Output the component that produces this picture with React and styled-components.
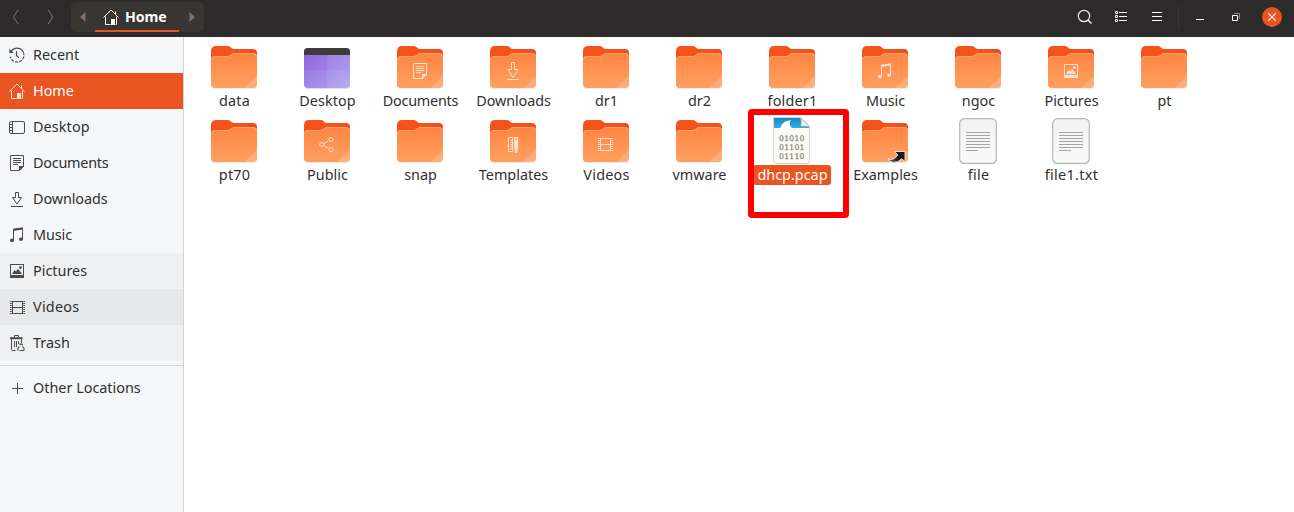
import React from 'react';
import styled, { createGlobalStyle } from 'styled-components';

const GlobalStyle = createGlobalStyle`
  * { box-sizing: border-box; }
  body { margin: 0; background: #fff; color: #303030; font: 14.4px/20px "Noto Sans", "Open Sans", sans-serif; }
`;

const Window = styled.div`
  position: relative;
  width: 1294px;
  height: 512px;
  display: flex;
  flex-direction: column;
  overflow: hidden;
  background: #fff;
`;

const HeaderBar = styled.header`
  height: 37px;
  flex: none;
  display: flex;
  align-items: flex-start;
  justify-content: space-between;
  padding-right: 4px;
  background: #2c2a2a;
  color: #fff;
`;

const HeaderGroup = styled.div`
  display: flex;
  align-items: center;
  height: 34px;
`;

const NavButton = styled.span`
  width: 35px;
  height: 34px;
  display: flex;
  align-items: center;
  justify-content: center;
  color: #7f7d7b;
  svg { display: block; }
`;

const PathBar = styled.nav`
  height: 30px;
  margin-left: 1px;
  display: flex;
  border-radius: 5px;
  background: #383632;
`;

const PathArrow = styled.span`
  width: ${(p) => p.$width}px;
  display: flex;
  align-items: center;
  justify-content: center;
  color: #75736f;
`;

const PathCurrent = styled.span`
  width: 84px;
  display: flex;
  align-items: center;
  padding: 2px 0 0 8px;
  gap: 6px;
  border-bottom: 2px solid #e95420;
  font-weight: 700;
  font-size: 14.2px;
  letter-spacing: -0.1px;
  white-space: nowrap;
`;

const HeaderButton = styled.span`
  width: 36px;
  height: 34px;
  display: flex;
  align-items: center;
  justify-content: center;
  svg { display: block; }
`;

const HeaderDivider = styled.span`
  width: 1px;
  height: 24px;
  margin: 0 3px;
  background: #383636;
`;

const CloseDot = styled.span`
  width: 20px;
  height: 20px;
  display: flex;
  border-radius: 50%;
  align-items: center;
  justify-content: center;
  background: #e95420;
`;

const Body = styled.div`
  flex: 1;
  display: flex;
`;

const Sidebar = styled.aside`
  width: 184px;
  flex: none;
  background: #f5f6f8;
  border-right: 1px solid #d2d3d5;
`;

const rowTone = { plain: 'transparent', active: '#e95420', soft: '#eff0f2', strong: '#e7e8ea' };

const Place = styled.div`
  height: 36px;
  display: flex;
  align-items: center;
  padding-left: 9px;
  gap: 8px;
  background: ${(p) => rowTone[p.$tone || 'plain']};
  color: ${(p) => (p.$tone === 'active' ? '#fff' : '#303030')};
  white-space: nowrap;
  svg { display: block; color: ${(p) => (p.$tone === 'active' ? '#ffe3d8' : '#4b4b4b')}; }
`;

const PlaceName = styled.span`
  letter-spacing: ${(p) => p.$track || 0}px;
`;

const Separator = styled.div`
  height: 1px;
  margin: 4px 0;
  background: #d4d5d7;
`;

const FileGrid = styled.main`
  flex: 1;
  display: grid;
  grid-template-columns: repeat(11, 93px);
  grid-auto-rows: 74px;
  align-content: start;
  padding: 6px 0 0 3.5px;
`;

const FileItem = styled.div`
  display: flex;
  flex-direction: column;
  align-items: center;
  svg { display: block; }
`;

const FileName = styled.span`
  height: 20px;
  padding: 0 3.5px 0 4.5px;
  border-radius: 3px;
  white-space: nowrap;
  letter-spacing: ${(p) => p.$track || 0}px;
  color: ${(p) => (p.$selected ? '#fff' : '#303030')};
  background: ${(p) => (p.$selected ? '#e95420' : 'transparent')};
`;

const Highlight = styled.div`
  position: absolute;
  left: 748px;
  top: 109px;
  width: 101px;
  height: 109px;
  border: 6px solid #fe0000;
  border-radius: 4px;
`;

const glyphs = {
  recent: (
    <g fill="none" stroke="currentColor">
      <path d="M2.1 4.4A7 7 0 1 1 1.2 9.6" strokeDasharray="18 1.3 3 1.3 3 1.3 3 1.3 3 1.3" strokeWidth="1.15" />
      <path d="M7.500 4v4.500l2.300 2.300" strokeWidth="1.15" />
      <path d="M.4 1.8V6H4.6Z" fill="currentColor" stroke="none" />
    </g>
  ),
  home: (
    <g fill="none" stroke="currentColor">
      <path d="M.5 8.5L8 1l7.5 7.5M12.5 5V2.5" />
      <path d="M2.5 7.5v8h5M13.5 7.5v8h-1" />
      <path d="M8 10h4v6H8Z" fill="currentColor" stroke="none" />
    </g>
  ),
  desktop: (
    <g fill="none" stroke="currentColor">
      <rect x=".5" y="2.5" width="15" height="12" rx="1.5" />
      <path d="M3.5 2.5v12M1 5.5h2M1 8.5h2M1 11.5h2" />
    </g>
  ),
  documents: (
    <g fill="none" stroke="currentColor">
      <path d="M1.5.5h13v11l-4 4h-9Z" />
      <path d="M4 3.5h8M4 5.5h8M4 7.5h8M4 9.5h5" />
      <path d="M10 16v-5h5Z" fill="currentColor" stroke="none" />
    </g>
  ),
  downloads: (
    <path d="M6.500 1.500h3v5h3L8 13 3.500 6.500h3ZM2 15.500h12" fill="none" stroke="currentColor" />
  ),
  downloadsTall: (
    <path d="M6.500-.5h3v7h3.500L8 14.700 3 6.500h3.500ZM2 16.500h12" fill="none" stroke="currentColor" />
  ),
  music: (
    <g fill="none" stroke="currentColor">
      <path d="M4.5 13V2.2l9-1.2v11" />
      <path d="M4 2l10-1.4v2L4 4Z" fill="currentColor" stroke="none" />
      <ellipse cx="3" cy="13.4" rx="2" ry="1.8" fill="currentColor" stroke="none" />
      <ellipse cx="12" cy="12.2" rx="2" ry="1.8" fill="currentColor" stroke="none" />
    </g>
  ),
  pictures: (
    <g fill="currentColor">
      <path fillRule="evenodd" d="M1 1h14v14H1ZM2 2v10h12V2Z" />
      <path d="M3 11L5.5 7 7 8.5 9 5.8 13 11Z" />
      <circle cx="11.5" cy="4.6" r="1.4" />
    </g>
  ),
  videos: (
    <g fill="none" stroke="currentColor">
      <path d="M3.500 2v13M13.500 2v13M3 2.500h11M3 8.500h11M3 14.500h11" />
      <path d="M1.500 2v13M15.500 2v13" strokeDasharray="1 1" />
      <path d="M2.500 2v13M14.500 2v13" strokeDasharray="1 1" opacity=".7" />
    </g>
  ),
  trash: (
    <g fill="none" stroke="currentColor">
      <path d="M5.5 2.5v-2h4v2" />
      <path d="M1 3.2h12.5" strokeWidth="2" />
      <path d="M2.5 4v10.5q0 1 1 1h3M12.5 4v4M5.5 6v6M7.5 6v6M9.5 6v3" />
      <path d="M9.2 15.5q-1.2-1.2 0-2.7l1.3-1.3M10.6 9.8l1.4-1.1 1.9 1.5M13.5 11.5l1.5 2q.5 1.8-1 2h-3.5" strokeWidth="1.1" />
    </g>
  ),
  add: <path d="M8.5 3v11M3 8.5h11" fill="none" stroke="currentColor" />,
  share: (
    <g fill="none" stroke="currentColor">
      <circle cx="2.700" cy="7.500" r="2" />
      <circle cx="12" cy="2.500" r="2" />
      <circle cx="12" cy="12.500" r="2" />
      <path d="M4.800 6.500l4.800-2.700M4.800 8.500l4.800 2.700" />
    </g>
  ),
  templates: (
    <g fill="none" stroke="currentColor" transform="translate(1)">
      <path d="M2.500.5h4v14h-4Z" />
      <path d="M4.500 3.500h2M4.500 5.500h2M4.500 7.500h2M4.500 9.500h2M4.500 11.500h2" />
      <path fillRule="evenodd" d="M8 0h4.200v12L10.800 16H9.400L8 12ZM9.300 1.200v1.600h1.600V1.200ZM9.500 12.800v1h1.200v-1Z" fill="currentColor" stroke="none" />
    </g>
  ),
};

function Glyph({ name }) {
  return <svg width="16" height="16" viewBox="0 0 16 16" overflow="visible">{glyphs[name]}</svg>;
}

function FolderIcon({ emblem, link }) {
  return (
    <svg width="48" height="48" viewBox="0 0 48 48">
      <path d="M1 10v31.5Q1 46 5 46h38q4 0 4-4V10Z" fill="#000" opacity=".08" />
      <path d="M1 8.500Q1 3 6 3h11.500q2 0 3.200 1.300l1 1Q22.500 6 24 6h19q4 0 4 4v20H1Z" fill="url(#folderBack)" />
      <path d="M1 17q0-4 4-4h12.500q2 0 3.300-1.200l1.200-1.100Q23 10 24.500 10H43q4 0 4 4v27q0 4-4 4H5q-4 0-4-4Z" fill="url(#folderFront)" />
      <path d="M1.500 16.700q0-3.200 3.500-3.200h12.500q2 0 3.500-1.300l1.200-1.100q.9-.6 2.300-.6H43q3.500 0 3.500 3.300" fill="none" stroke="#ffb27f" strokeOpacity=".75" />
      <path d="M34.500 45L47 32.500V41q0 4-4 4Z" fill="#fff" opacity=".17" />
      {emblem && <g transform={emblem === 'videos' ? 'translate(15 19)' : 'translate(16 20)'} color="#ffe2d2">{glyphs[emblem]}</g>}
      {link && (
        <path d="M33.500 34.500H44v10.300l-3.100-3.100q-4.300 4.300-9.400 3.600-3.800-.5-4.400-3.600 2.500 1.500 5.500.1 2.600-1.200 4.200-3.800Z" fill="url(#linkFill)" stroke="#fff" strokeWidth=".8" />
      )}
    </svg>
  );
}

function DesktopIcon() {
  return (
    <svg width="48" height="48" viewBox="0 0 48 48">
      <path d="M1 20h46v22q0 4-4 4H5q-4 0-4-4Z" fill="#000" opacity=".12" />
      <rect x="1" y="5" width="46" height="40" rx="4" fill="url(#desktopFill)" />
      <path d="M24 12h23v15.500H24Z" fill="#fff" opacity=".08" />
      <path d="M1 27.500h23V45H5q-4 0-4-4Z" fill="#fff" opacity=".06" />
      <path d="M24 27.500h23V41q0 4-4 4H24Z" fill="#fff" opacity=".12" />
      <path d="M1 12V9q0-4 4-4h38q4 0 4 4v3Z" fill="#3d3c3b" />
    </svg>
  );
}

function TextIcon() {
  return (
    <svg width="48" height="48" viewBox="0 0 48 48">
      <rect x="5" y="2" width="38" height="45.500" rx="5" fill="#000" opacity=".08" />
      <rect x="5.700" y="1.600" width="36.600" height="44.800" rx="4.800" fill="url(#paper)" stroke="#b9b9b9" strokeWidth="1.200" />
      <path d="M12 15.500h24M12 18.500h24M12 21.500h24M12 24.500h24M12 27.500h24M12 30.500h24M12 33.500h12" stroke="#a4a4a4" />
    </svg>
  );
}

function CaptureIcon() {
  return (
    <svg width="48" height="48" viewBox="0 0 48 48">
      <path d="M5.500.5H33l8.500 9V44q0 2.500-2 2.500h-32q-2 0-2-2.500Z" fill="#fcfcf4" stroke="#d3d5c8" />
      <path d="M6 11V1h26.500L41 10v1Z" fill="url(#captureSky)" />
      <path d="M12 11.500C14 6 17 3.700 22.800 3.300q-2.600 4 1.200 8.200Z" fill="#fff" />
      <path d="M32.500.8L41.500 10q-4.300-1.300-8.700-.5Q33.800 5 32.500.8Z" fill="#f3f5e7" stroke="#8fa79f" strokeWidth=".7" />
      <g fill="#8e8e84" stroke="#8e8e84" strokeWidth=".3" fontFamily="DejaVu Serif, serif" fontSize="7.700">
        <text x="11" y="24" textLength="25.500">01010</text>
        <text x="11" y="33" textLength="25.500">01101</text>
        <text x="11" y="42" textLength="25.500">01110</text>
      </g>
    </svg>
  );
}

function SharedPaints() {
  return (
    <defs>
      <linearGradient id="folderBack"><stop stopColor="#f3521d" /><stop offset=".65" stopColor="#fa5118" /><stop offset="1" stopColor="#e94e20" /></linearGradient>
      <linearGradient id="folderFront" x2="0" y2="1"><stop stopColor="#ff8442" /><stop offset="1" stopColor="#ffa060" /></linearGradient>
      <linearGradient id="desktopFill" x2="1" y2="1"><stop stopColor="#8f5ed9" /><stop offset="1" stopColor="#aaa2f0" /></linearGradient>
      <linearGradient id="paper" x2="0" y2="1"><stop stopColor="#f2f2f2" /><stop offset="1" stopColor="#fafafa" /></linearGradient>
      <linearGradient id="captureSky" x2="0" y2="1"><stop stopColor="#1789c9" /><stop offset="1" stopColor="#36aee8" /></linearGradient>
      <linearGradient id="linkFill"><stop stopColor="#777" /><stop offset=".6" stopColor="#171717" /></linearGradient>
    </defs>
  );
}

const Paints = styled.svg`
  position: absolute;
  width: 0;
  height: 0;
`;

const places = [
  { name: 'Recent', icon: 'recent' },
  { name: 'Home', icon: 'home', tone: 'active' },
  { name: 'Desktop', icon: 'desktop' },
  { name: 'Documents', icon: 'documents' },
  { name: 'Downloads', icon: 'downloads' },
  { name: 'Music', icon: 'music' },
  { name: 'Pictures', icon: 'pictures', tone: 'soft' },
  { name: 'Videos', icon: 'videos', tone: 'strong' },
  { name: 'Trash', icon: 'trash', tone: 'soft' },
];

const files = [
  { name: 'data' },
  { name: 'Desktop', kind: 'desktop' },
  { name: 'Documents', emblem: 'documents' },
  { name: 'Downloads', emblem: 'downloadsTall' },
  { name: 'dr1' },
  { name: 'dr2' },
  { name: 'folder1' },
  { name: 'Music', emblem: 'music' },
  { name: 'ngoc' },
  { name: 'Pictures', emblem: 'pictures' },
  { name: 'pt' },
  { name: 'pt70' },
  { name: 'Public', emblem: 'share' },
  { name: 'snap' },
  { name: 'Templates', emblem: 'templates' },
  { name: 'Videos', emblem: 'videos' },
  { name: 'vmware' },
  { name: 'dhcp.pcap', kind: 'capture', selected: true },
  { name: 'Examples', link: true },
  { name: 'file', kind: 'text' },
  { name: 'file1.txt', kind: 'text' },
];

const tracking = {
  Documents: -0.24,
  Downloads: -0.1,
  folder1: 0.2,
  Desktop: 0.1,
  Music: -0.1,
  Videos: 0.25,
  data: 0.25,
  pt70: 0.2,
  'file1.txt': 0.3,
  file: 0.25,
};

function FileIcon({ file }) {
  if (file.kind === 'desktop') return <DesktopIcon />;
  if (file.kind === 'text') return <TextIcon />;
  if (file.kind === 'capture') return <CaptureIcon />;
  return <FolderIcon emblem={file.emblem} link={file.link} />;
}

export default function App() {
  return (
    <Window>
      <GlobalStyle />
      <Paints><SharedPaints /></Paints>
      <HeaderBar>
        <HeaderGroup>
          <NavButton><svg width="16" height="16"><path d="M8 1L3.500 8 8 15" fill="none" stroke="currentColor" /></svg></NavButton>
          <NavButton><svg width="16" height="16"><path d="M3.200 1l4.500 7-4.500 7" fill="none" stroke="currentColor" /></svg></NavButton>
          <PathBar>
            <PathArrow $width={24}><svg width="6" height="10"><path d="M5.500 0v10L0 5Z" fill="currentColor" /></svg></PathArrow>
            <PathCurrent><Glyph name="home" />Home</PathCurrent>
            <PathArrow $width={25}><svg width="6" height="10"><path d="M.5 0v10L6 5Z" fill="currentColor" /></svg></PathArrow>
          </PathBar>
        </HeaderGroup>
        <HeaderGroup>
          <HeaderButton><svg width="16" height="16" fill="none" stroke="#eee"><circle cx="7" cy="7" r="5.700" strokeWidth="1.200" /><path d="M11 11l3.500 3.500" strokeWidth="1.500" /></svg></HeaderButton>
          <HeaderButton><svg width="16" height="16" fill="none" stroke="#fff"><path d="M2.500 2.500h2v2h-2ZM2.500 6.500h2v2h-2ZM2.500 10.500h2v2h-2ZM6 3.500h8M6 7.500h8M6 11.500h8" /></svg></HeaderButton>
          <HeaderButton><svg width="16" height="16" fill="none" stroke="#fff"><path d="M3 3.500h10M3 7.500h10M3 11.500h10" /></svg></HeaderButton>
          <HeaderDivider />
          <HeaderButton><svg width="16" height="16"><path d="M4 10.500h8" stroke="#fff" /></svg></HeaderButton>
          <HeaderButton><svg width="16" height="16" fill="none"><path d="M6 4.500h5.500V10" stroke="#8b8989" /><path d="M4.500 6.500h5v5h-5Z" stroke="#fff" /></svg></HeaderButton>
          <HeaderButton><CloseDot><svg width="8" height="8"><path d="M.3.3l7.400 7.400M7.700.3L.3 7.700" stroke="#fff" strokeWidth="1.200" /></svg></CloseDot></HeaderButton>
        </HeaderGroup>
      </HeaderBar>
      <Body>
        <Sidebar>
          {places.map((p) => (
            <Place key={p.name} $tone={p.tone}>
              <Glyph name={p.icon} />
              <PlaceName $track={tracking[p.name]}>{p.name}</PlaceName>
            </Place>
          ))}
          <Separator />
          <Place>
            <Glyph name="add" />
            <PlaceName>Other Locations</PlaceName>
          </Place>
        </Sidebar>
        <FileGrid>
          {files.map((f) => (
            <FileItem key={f.name}>
              <FileIcon file={f} />
              <FileName $selected={f.selected} $track={tracking[f.name]}>{f.name}</FileName>
            </FileItem>
          ))}
        </FileGrid>
      </Body>
      <Highlight />
    </Window>
  );
}
